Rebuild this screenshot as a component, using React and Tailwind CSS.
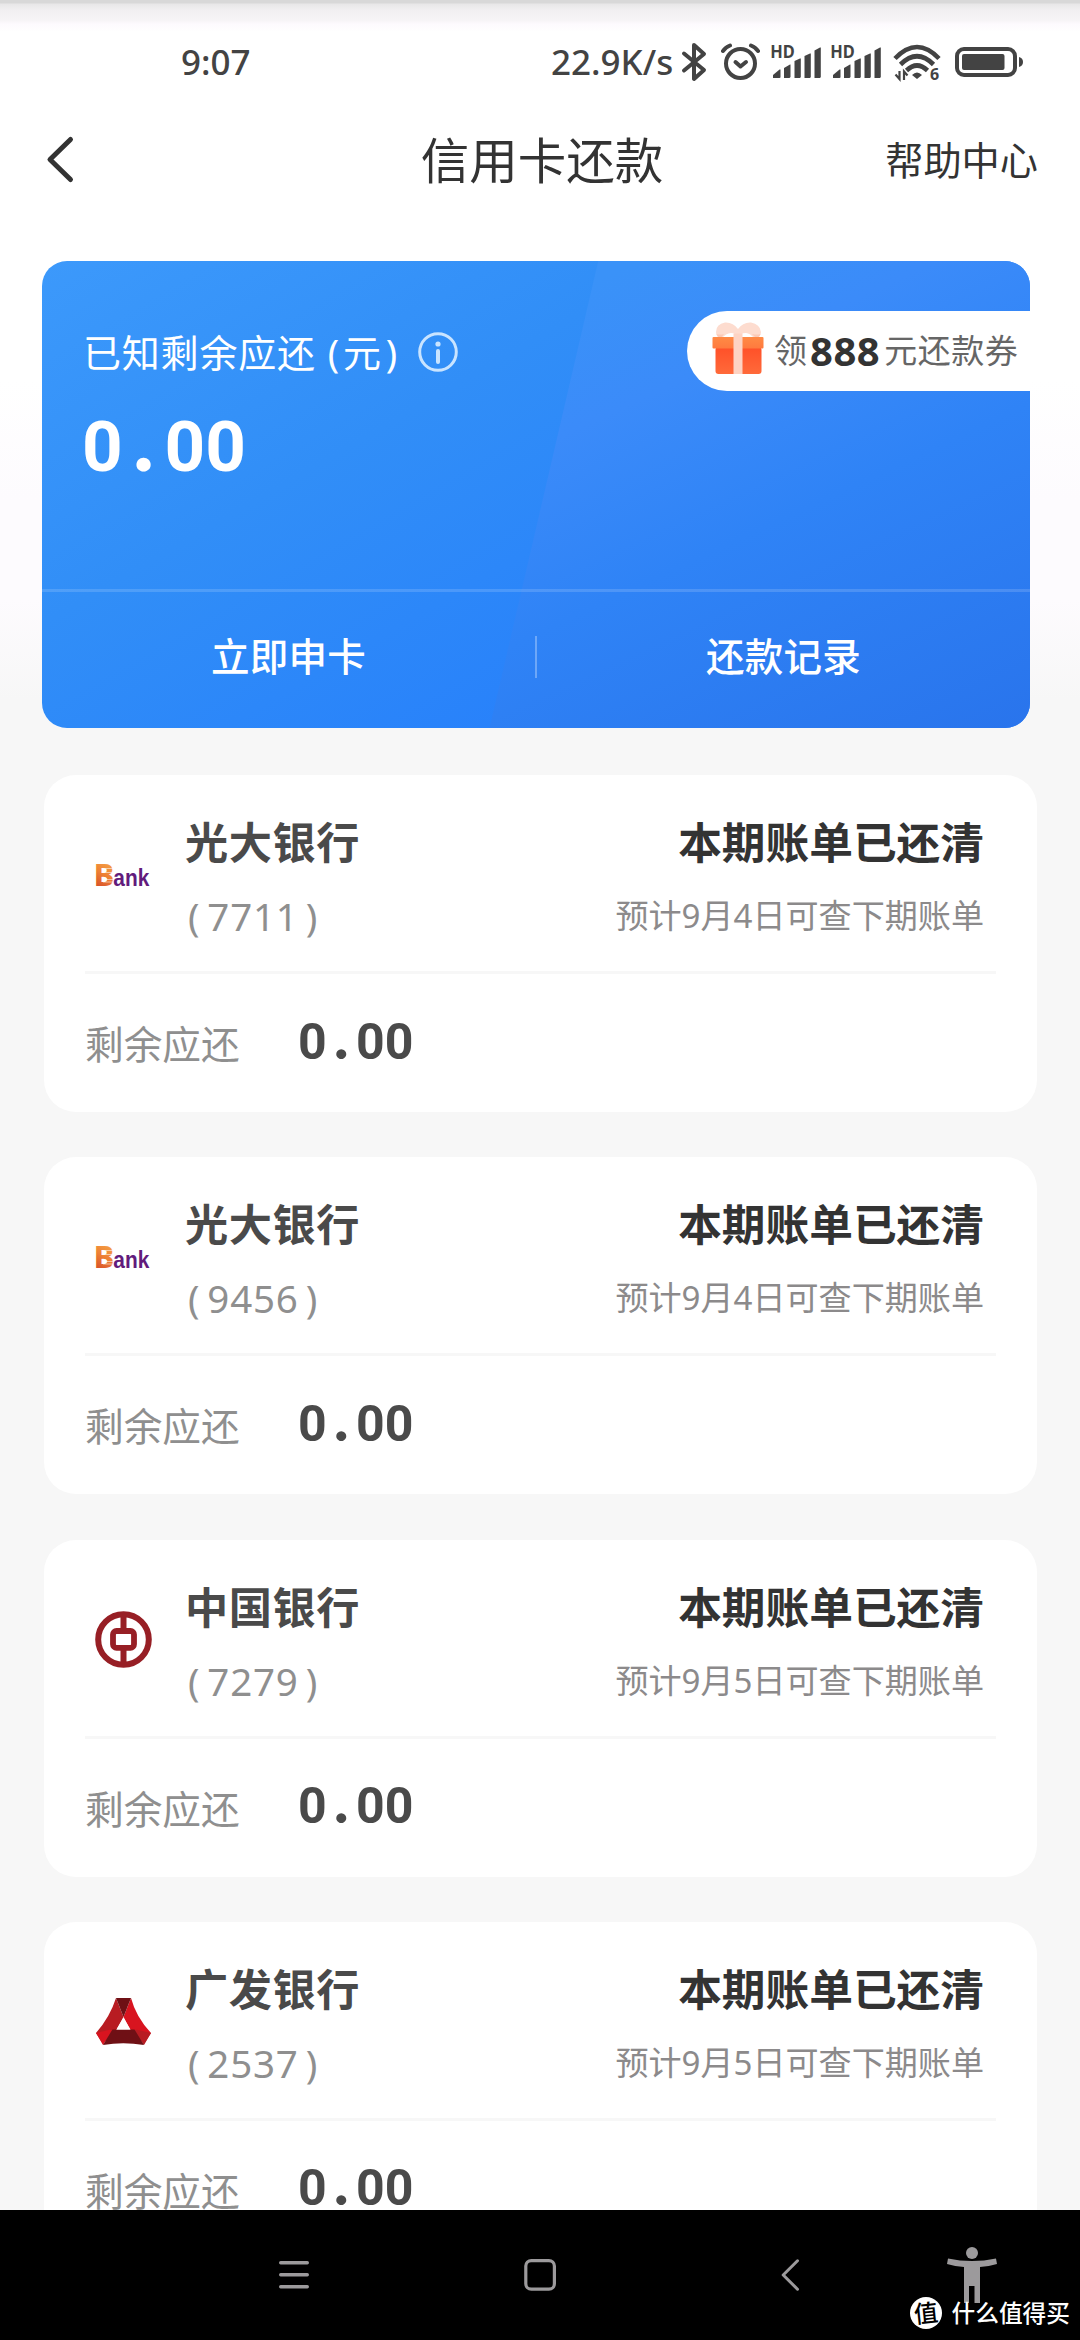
const accounts = [
  { id: 1, bank: '光大银行', logo: 'ceb', tail: '7711', due: '预计9月4日可查下期账单' },
  { id: 2, bank: '光大银行', logo: 'ceb', tail: '9456', due: '预计9月4日可查下期账单' },
  { id: 3, bank: '中国银行', logo: 'boc', tail: '7279', due: '预计9月5日可查下期账单' },
  { id: 4, bank: '广发银行', logo: 'cgb', tail: '2537', due: '预计9月5日可查下期账单' },
];

const BluetoothIcon = () => (
  <svg width="26" height="40" viewBox="0 0 26 40" fill="none" stroke="#434343" strokeWidth="4" strokeLinecap="round" strokeLinejoin="round">
    <path d="M3 11.5 L23 28 L13 37 V3 L23 12 L3 28.5" />
  </svg>
);

const AlarmIcon = () => (
  <svg width="39" height="40" viewBox="0 0 39 40" fill="none" stroke="#434343" strokeWidth="4" strokeLinecap="round" strokeLinejoin="round">
    <circle cx="19.5" cy="21.5" r="14.5" />
    <path d="M14.5 20 L19.5 24.5 L25 20" />
    <path d="M2 9 Q4 5.5 9 3.5 M37 9 Q35 5.5 30 3.5" />
  </svg>
);

const SignalIcon = () => (
  <svg className="overflow-visible" width="50" height="40" viewBox="0 0 50 40" fill="#434343">
    <text x="-0.8" y="16.2" fontSize="17" fontWeight="700" fontFamily="Noto Sans, sans-serif" textLength="24.5" lengthAdjust="spacingAndGlyphs">HD</text>
    <path d="M2 36 V33 L8.5 27.5 H9.5 V35 Q9.5 36 8.5 36 Z" />
    <path d="M13 36 V26 L19 22.5 H19.5 V35 L18.5 36 Z" />
    <path d="M23.5 36 V19 L29 16.5 H29.8 V35 L29 36 Z" />
    <path d="M33.5 36 V14 L39 11.5 H39.8 V35 L39 36 Z" />
    <path d="M43.5 36 V8.5 L49 5.5 H49.8 V35 L49 36 Z" />
  </svg>
);

const WifiIcon = () => (
  <svg className="overflow-visible" width="46" height="40" viewBox="0 0 46 40" fill="none" stroke="#434343" strokeWidth="4.6">
    <path d="M1 16.5 Q23 -6.5 45 16.5" />
    <path d="M6.5 22.5 Q23 6 39.5 22.5" />
    <path d="M12.5 28.5 Q23 18.5 33.5 28.5" />
    <path d="M18 33 Q23 28 28 33 L23 37 Z" fill="#434343" stroke="none" />
    <path d="M5.5 29 V37 L1.5 32.5 M10 38 V29.5 L13.5 33.5" strokeWidth="2.2" />
    <text x="36" y="38" fontSize="16" fontWeight="700" fontFamily="Noto Sans, sans-serif" fill="#434343" stroke="none">6</text>
  </svg>
);

const BatteryIcon = () => (
  <svg width="68" height="40" viewBox="0 0 68 40" fill="#434343">
    <rect x="2" y="7" width="58" height="26" rx="7" fill="none" stroke="#434343" strokeWidth="4" />
    <rect x="7" y="12" width="42.5" height="16" rx="2" />
    <path d="M64 15 Q68 16 68 20 Q68 24 64 25 Z" />
  </svg>
);

const GiftIcon = () => (
  <svg width="52" height="54" viewBox="0 0 52 54">
    <defs>
      <linearGradient id="lid" x1="0" y1="0" x2="0" y2="1">
        <stop offset="0" stopColor="#ff8a45" />
        <stop offset="1" stopColor="#ff7a3e" />
      </linearGradient>
      <linearGradient id="box" x1="0" y1="0" x2="0" y2="1">
        <stop offset="0" stopColor="#ff5028" />
        <stop offset="1" stopColor="#ff6a3a" />
      </linearGradient>
    </defs>
    <path fillRule="evenodd" fill="#fddccf" d="M26 8 Q21 1 13 1.5 Q4 3 4 11 Q4 16 9 18 Q14 12 19 12 Q24 12 26 17 Q28 12 34 12 Q38 12 43 18 Q49 16 49 11 Q48 3 39 1.5 Q31 1 26 8 Z" />
    <path fill="#fbc9b6" d="M4.5 13 Q6 17 9 17 L12 13 Q8 14 4.5 13 Z M48.5 13 Q47 17 44 17 L40 13 Q45 14 48.5 13 Z" />
    <rect x="3.5" y="26" width="46" height="27" rx="3" fill="url(#box)" />
    <rect x="0.5" y="16" width="51" height="11.5" rx="1" fill="url(#lid)" />
    <rect x="21.5" y="12.5" width="9" height="40.5" fill="#fdd3c3" />
  </svg>
);

const InfoIcon = () => (
  <svg width="40" height="40" viewBox="0 0 40 40" fill="none" stroke="#c9e4ff" strokeWidth="3">
    <circle cx="20" cy="20" r="18.3" />
    <path d="M20 19 V30" strokeWidth="4" strokeLinecap="round" />
    <circle cx="20" cy="12" r="2.6" fill="#c9e4ff" stroke="none" />
  </svg>
);

const BankLogo = ({ type }) => {
  if (type === 'boc') {
    return (
      <svg width="57" height="57" viewBox="0 0 57 57" fill="none" stroke="#971f25">
        <circle cx="28.5" cy="28.5" r="25.3" strokeWidth="6" />
        <rect x="18" y="20" width="21" height="16.8" rx="3.5" strokeWidth="5.8" />
        <path d="M28.5 5 V19 M28.5 38 V52" strokeWidth="6" />
      </svg>
    );
  }
  if (type === 'cgb') {
    return (
      <svg width="57" height="50" viewBox="0 0 57 50">
        <path fill="#b81c22" d="M21 2 L28.5 21 L21.5 33.5 L8 48 L1 37 Q15 21 21 2 Z" />
        <path fill="#d8141f" d="M36 2 L28.5 21 L35 33.5 L49 48 L56 37 Q41 21 36 2 Z" />
        <path fill="#d8141f" d="M1 37 L14.5 33.8 L17 34 L8 49 Z" />
        <path fill="#b81c22" d="M56 37 L42 33.8 L39 34 L49 49 Z" />
        <path fill="#6f1015" d="M21 2 H36 L28.5 21 Z" />
        <path fill="#6f1015" d="M17.5 33.5 H39.5 L49 49 Q28 45.5 8 49 Z" />
        <path fill="#fff" d="M28.5 21.5 L35.5 33.5 H21.5 Z" />
      </svg>
    );
  }
  return (
    <svg className="overflow-visible" width="57" height="26" viewBox="0 0 57 26">
      <defs>
        <linearGradient id="ceb" x1="0.6" y1="0" x2="0.3" y2="1">
          <stop offset="0" stopColor="#f7b04a" />
          <stop offset="0.5" stopColor="#ee8136" />
          <stop offset="1" stopColor="#cf3f24" />
        </linearGradient>
      </defs>
      <text x="-1.3" y="23.5" fontSize="31" fontWeight="800" fontFamily="Noto Sans, sans-serif" fill="url(#ceb)" textLength="20.5" lengthAdjust="spacingAndGlyphs">B</text>
      <path stroke="#fff" strokeOpacity="0.55" strokeWidth="1" d="M8 6.5 H18 M8 10.5 H18 M8 17.5 H18 M8 20 H18" />
      <text x="18.3" y="23.5" fontSize="24.5" fontWeight="600" fontFamily="Liberation Sans, sans-serif" fill="#621b7c" textLength="36" lengthAdjust="spacingAndGlyphs">ank</text>
    </svg>
  );
};

// tabular figure where the point takes a full digit cell
const Amount = ({ value, className }) => (
  <div className={`flex items-baseline font-[Roboto,sans-serif] font-bold ${className}`}>
    {value.split('').map((ch, i) => (
      <span key={i} className={ch === '.' ? 'w-[0.48em] text-center font-[Lato,sans-serif] text-[1.22em] font-black' : 'w-[0.575em] text-center'}>{ch}</span>
    ))}
  </div>
);

const StatusBar = () => (
  <div className="flex h-[124px] items-center pl-[181px] pr-[57px] text-[35px] font-medium text-[#434343]">
    <span>9:07</span>
    <div className="ml-auto flex items-center">
      <span className="w-[130px] whitespace-nowrap">22.9K/s</span>
      <BluetoothIcon />
      <div className="ml-[14px]"><AlarmIcon /></div>
      <div className="ml-[11px] flex gap-[10px]">
        <SignalIcon />
        <SignalIcon />
      </div>
      <div className="ml-[13px]"><WifiIcon /></div>
      <div className="ml-[15px]"><BatteryIcon /></div>
    </div>
  </div>
);

const Header = () => (
  <header className="grid h-[72px] grid-cols-3 items-center pl-[46px] pr-[42px] text-[#333]">
    <svg width="29" height="50" viewBox="0 0 29 50" fill="none" stroke="#333" strokeWidth="5" strokeLinecap="round" strokeLinejoin="round">
      <path d="M24.5 4.5 L4 24.5 L24.5 44.5" />
    </svg>
    <h1 className="text-center text-[48.5px] leading-[72px]">信用卡还款</h1>
    <button className="justify-self-end text-[38.2px] leading-[60px]">帮助中心</button>
  </header>
);

const SummaryCard = () => (
  <section className="relative isolate ml-[42px] mt-[65px] flex h-[467px] w-[988px] flex-col overflow-hidden rounded-[25px] bg-[linear-gradient(150deg,#3c99fb_0%,#318ef7_35%,#2780fb_75%)] text-white">
    <div className="absolute inset-0 -z-10 bg-[linear-gradient(155deg,#3a92f8_30%,#3b8bf9_45%,#2f83f6_65%,#2974ec_100%)] [clip-path:polygon(56.3%_0,100%_0,100%_100%,45.3%_100%)]" />
    <div className="flex h-[328px] items-start justify-between">
      <div className="pl-[41px] pt-[66px]">
        <div className="flex h-[50px] items-center text-[38px] tracking-[0.8px]">
          <span>已知剩余应还</span>
          <span className="ml-[12px]">(</span>
          <span className="ml-[3px]">元</span>
          <span className="ml-[4px]">)</span>
          <div className="ml-[20px]"><InfoIcon /></div>
        </div>
        <Amount value="0.00" className="-ml-px mt-[26px] text-[71px] leading-[70px]" />
      </div>
      <button className="mt-[50px] flex h-[80px] w-[343px] items-center rounded-l-full bg-white pl-[25px] text-[33px] text-[#666]">
        <div className="-mt-[6px]"><GiftIcon /></div>
        <span className="ml-[10px]">领</span>
        <span className="ml-[3px] mr-[4px] text-[40px] font-bold leading-[60px] tracking-[0.5px] text-[#333]">888</span>
        <span className="tracking-[0.5px]">元还款券</span>
      </button>
    </div>
    <div className="h-[3px] bg-white/15" />
    <div className="flex flex-1 items-center pb-[6px] text-[38.5px] font-medium tracking-[0.3px]">
      <button className="flex-1">立即申卡</button>
      <div className="h-[42px] w-[2px] bg-white/30" />
      <button className="flex-1">还款记录</button>
    </div>
  </section>
);

const AccountCard = ({ account }) => (
  <article className="h-[337px] rounded-[32px] bg-white">
    <div className="flex h-[196px]">
      <div className="flex w-[141px] items-center justify-center pl-[18px] pt-[3px]">
        <BankLogo type={account.logo} />
      </div>
      <div className="pt-[38px]">
        <h2 className="text-[43.2px] font-bold leading-[60px] tracking-[0.6px] text-[#4a4a4a]">{account.bank}</h2>
        <div className="mt-[13px] flex pl-[3px] text-[38.5px] leading-[60px] tracking-[0.8px] text-[#8f8f8f]">
          <span>(</span>
          <span className="ml-[7px]">{account.tail}</span>
          <span className="ml-[7px]">)</span>
        </div>
      </div>
      <div className="ml-auto pr-[53px] pt-[37px] text-right">
        <div className="text-[43.7px] font-bold leading-[60px] text-[#333]">本期账单已还清</div>
        <div className="mt-[14px] text-[33.1px] leading-[60px] text-[#8c8a8b]">{account.due}</div>
      </div>
    </div>
    <div className="mx-[41px] h-[3px] bg-[#f7f7f7]" />
    <div className="flex h-[138px] items-center pl-[41px]">
      <span className="w-[213px] pt-[2px] text-[38.7px] text-[#8f8f8f]">剩余应还</span>
      <Amount value="0.00" className="-mt-[9px] text-[50px] leading-[60px] text-[#4a4a4a]" />
    </div>
  </article>
);

const NavBar = () => (
  <nav className="relative h-[130px] bg-black">
    <div className="flex h-full items-center pl-[278px] text-[#9c9a9c]">
      <svg width="32" height="32" viewBox="0 0 32 32" stroke="currentColor" strokeWidth="3.4" strokeLinecap="round">
        <path d="M2.7 3.7 H29.3 M2.7 15.7 H29.3 M2.7 27.7 H29.3" />
      </svg>
      <svg className="ml-[214px]" width="32" height="32" viewBox="0 0 32 32" fill="none" stroke="currentColor" strokeWidth="3.2">
        <rect x="1.8" y="1.6" width="28.6" height="28.6" rx="5.5" />
      </svg>
      <svg className="ml-[225px]" width="19" height="34" viewBox="0 0 19 34" fill="none" stroke="currentColor" strokeWidth="3" strokeLinecap="round" strokeLinejoin="round">
        <path d="M16.5 2.8 L2.2 17 L16.5 31.2" />
      </svg>
      <svg className="ml-[147px]" width="50" height="57" viewBox="0 0 50 57" fill="currentColor">
        <circle cx="25" cy="6" r="6" />
        <path d="M1 11.5 Q25 16.5 49 11.5 L50 17 Q42 19.5 33 20 V56 H27.5 V39 H22 V56 H17 V20 Q8 19.5 0 17 Z" />
      </svg>
    </div>
    <div className="absolute bottom-[9px] right-[10px] flex items-center text-white">
      <span className="flex size-[32px] items-center justify-center rounded-full bg-white text-[24px] font-medium leading-[36px] text-black"><span className="-rotate-6">值</span></span>
      <span className="ml-[10px] text-[23.7px] font-medium leading-[36px]">什么值得买</span>
    </div>
  </nav>
);

export default function App() {
  return (
    <div className="h-[2340px] w-[1080px] overflow-hidden bg-[#f7f7f7] font-['Noto_Sans','Noto_Sans_CJK_SC',sans-serif]">
      <main className="h-[2210px] overflow-hidden bg-[linear-gradient(#d8d8d8_0,#d8d8d8_3px,#e8e7e8_4px,#f1eff1_10px,#f6f4f6_20px,#fdfafe_24px,#fff_32px,#fff_380px,#fdfbfe_500px,#fdfbfe_600px,#f7f7f7_700px)]">
        <StatusBar />
        <Header />
        <SummaryCard />
        <div className="ml-[44px] mt-[47px] flex w-[993px] flex-col gap-[45.3px]">
          {accounts.map(a => <AccountCard key={a.id} account={a} />)}
        </div>
      </main>
      <NavBar />
    </div>
  );
}
